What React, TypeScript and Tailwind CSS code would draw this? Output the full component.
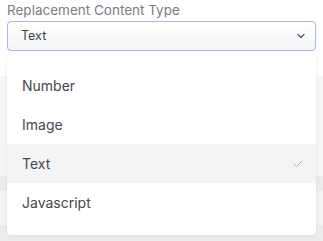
import { ChevronDown, Check } from "lucide-react";

const OPTIONS = ["Number", "Image", "Text", "Javascript"];
const SELECTED = "Text";

export default function App() {
  return (
    <div className="relative h-[241px] w-[323px] overflow-hidden bg-white font-['Inter',sans-serif]">
      {/* page behind the open menu */}
      <div className="flex flex-col">
        <div className="h-[76px] bg-white" />
        <div className="h-[100px] bg-[#f6f6f8]" />
        <div className="h-[15px] bg-[#ececef]" />
        <div className="h-[34px] bg-[#f4f4f6]" />
        <div className="h-[16px] bg-[#ececef]" />
      </div>

      <div className="absolute inset-x-[7px] top-[1px]">
        <label className="block text-[13.5px] leading-[18px] text-[#7a7d85]">Replacement Content Type</label>
        <button className="mt-[2px] flex h-[30px] w-full items-center justify-between rounded-[4px] border border-[#a9b4f5] bg-gradient-to-b from-white to-[#f4f5f8] pl-[13px] pr-[8px] text-[12.5px] text-[#3d3f46]">
          <span>Text</span>
          <ChevronDown size={12} strokeWidth={2.5} className="text-[#5b5e66]" />
        </button>

        <ul className="mt-[4px] rounded-[4px] bg-white pt-[11px] pb-[13px] shadow-[0_1px_4px_rgba(0,0,0,0.08)]">
          {OPTIONS.map((o) => (
            <li
              key={o}
              className={
                "flex h-[39px] items-center justify-between pl-[15px] pr-[12px] text-[14px] text-[#45474e] " +
                (o === SELECTED ? "bg-[#f4f4f6]" : "")
              }
            >
              <span className="-mt-[1px]">{o}</span>
              {o === SELECTED && <Check size={12} strokeWidth={1.5} className="text-[#9a9ca3]" />}
            </li>
          ))}
        </ul>
      </div>
    </div>
  );
}
